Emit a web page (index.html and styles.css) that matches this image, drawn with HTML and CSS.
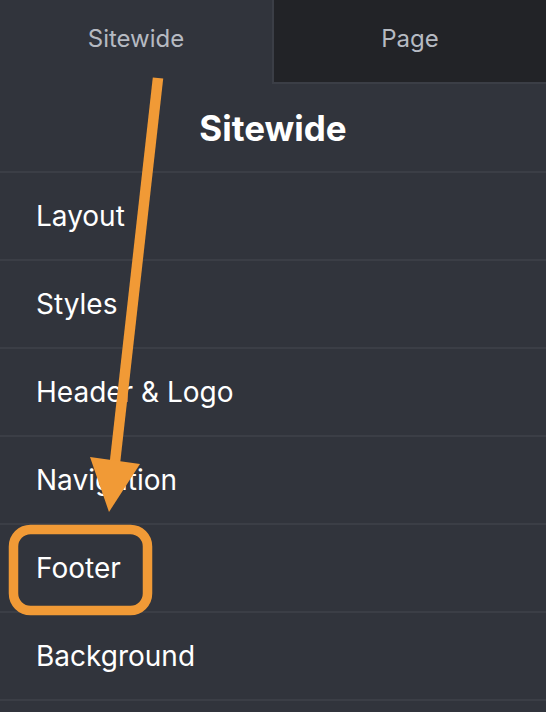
FILE: index.html
```html
<!DOCTYPE html>
<html>
<head>
<meta charset="utf-8">
<link rel="stylesheet" href="styles.css">
</head>
<body>
<div class="panel">
  <div class="tabs">
    <div class="tab active">Sitewide</div>
    <div class="tab">Page</div>
  </div>
  <h1 class="title">Sitewide</h1>
  <ul class="menu">
    <li class="item">Layout</li>
    <li class="item">Styles</li>
    <li class="item">Header &amp; Logo</li>
    <li class="item">Navigation</li>
    <li class="item">Footer</li>
    <li class="item">Background</li>
  </ul>
  <svg class="annot" width="546" height="712" viewBox="0 0 546 712">
    <line x1="158" y1="78" x2="115" y2="462" stroke="#f19a36" stroke-width="10.5"/>
    <polygon points="90,457 140,464 109,512" fill="#f19a36"/>
    <rect x="13.5" y="529.5" width="134" height="81" rx="17" ry="17" fill="none" stroke="#f19a36" stroke-width="9.5"/>
  </svg>
</div>
</body>
</html>
```
FILE: styles.css
```css
* { box-sizing: border-box; }
html, body { margin: 0; padding: 0; }
body {
  background: #31343c;
  font-family: Inter, "Noto Sans", sans-serif;
  width: 546px;
  height: 712px;
  overflow: hidden;
}
.panel {
  position: relative;
  width: 546px;
  height: 712px;
  background: #31343c;
}
.tabs {
  display: flex;
  height: 84px;
}
.tab {
  display: flex;
  align-items: center;
  justify-content: center;
  padding-bottom: 8px;
  font-size: 24px;
  color: #b6bac2;
}
.tab.active {
  width: 272px;
  background: #31343c;
}
.tab:not(.active) {
  flex: 1;
  background: #222327;
  border-left: 2px solid #3b3e46;
  border-bottom: 2px solid #3b3e46;
  padding-bottom: 6px;
}
.title {
  margin: 0;
  height: 89px;
  display: flex;
  align-items: center;
  justify-content: center;
  font-size: 35px;
  font-weight: 700;
  color: #ffffff;
  border-bottom: 2px solid #3b3e46;
}
.menu {
  list-style: none;
  margin: 0;
  padding: 0;
}
.item {
  height: 88px;
  display: flex;
  align-items: center;
  padding-left: 36px;
  font-size: 28px;
  color: #ffffff;
  border-bottom: 2px solid #3b3e46;
}
.annot {
  position: absolute;
  left: 0;
  top: 0;
  pointer-events: none;
}
```
